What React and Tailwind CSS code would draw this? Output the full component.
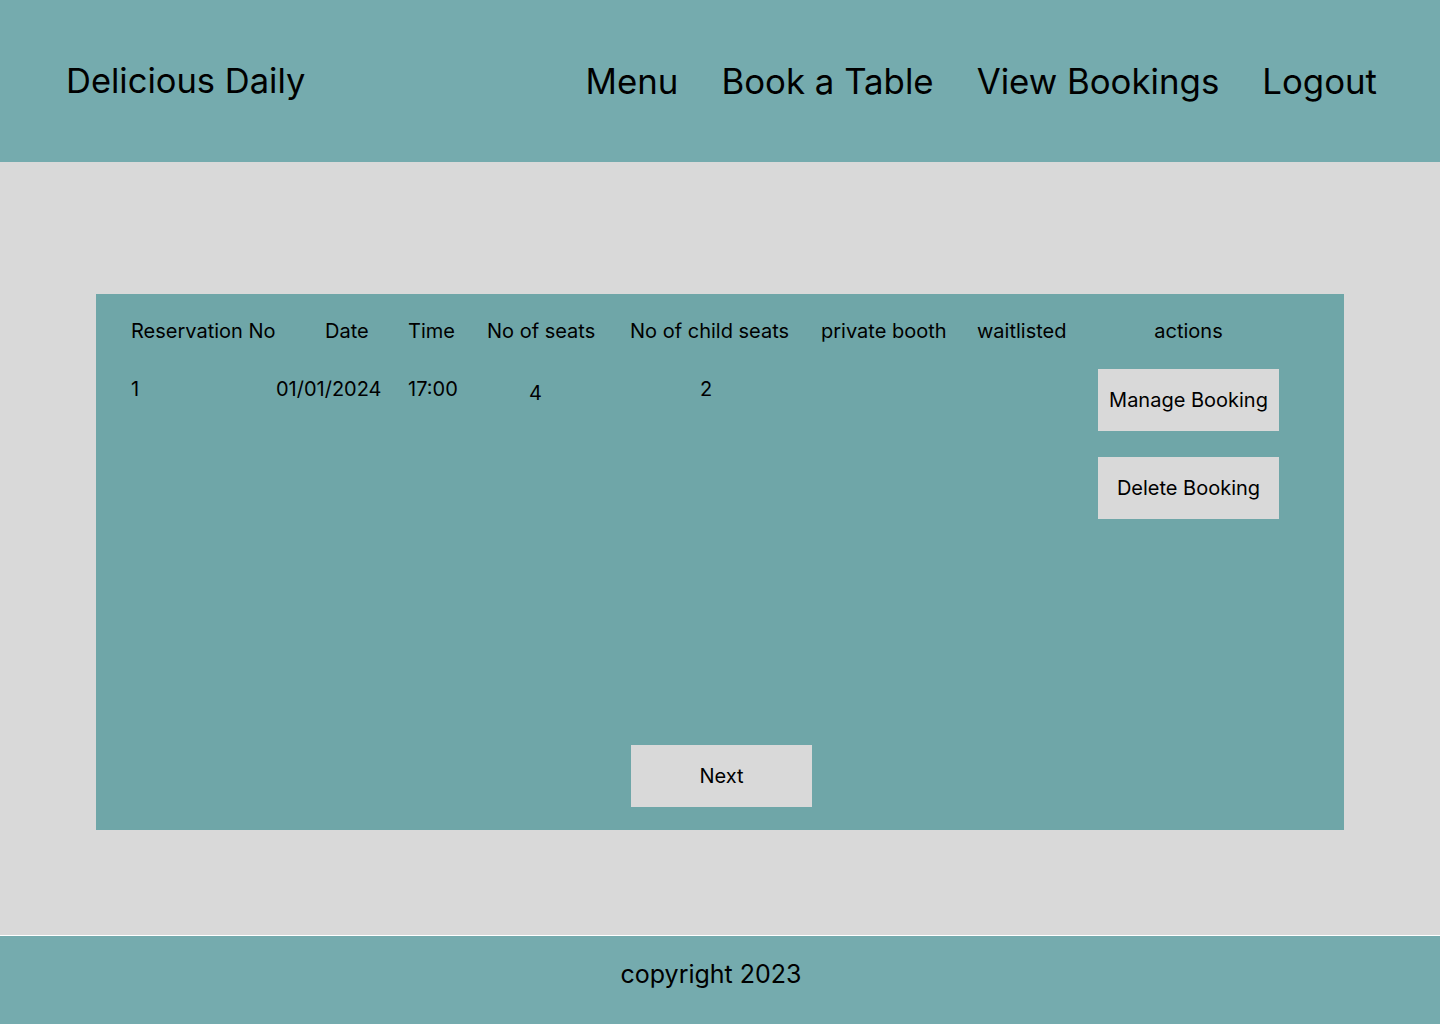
const nav = ['Menu', 'Book a Table', 'View Bookings', 'Logout'];

const headers = [
  { label: 'Reservation No', cls: '' },
  { label: 'Date', cls: 'pl-[49px]' },
  { label: 'Time', cls: '' },
  { label: 'No of seats', cls: '' },
  { label: 'No of child seats', cls: '' },
  { label: 'private booth', cls: '' },
  { label: 'waitlisted', cls: '' },
  { label: 'actions', cls: 'text-center' },
];

const GrayButton = ({ children, className = '' }) => (
  <button className={`w-[181px] h-[62px] bg-[#d9d9d9] text-[20px] text-black ${className}`}>
    {children}
  </button>
);

export default function App() {
  return (
    <div className="min-h-screen flex flex-col bg-[#d9d9d9] text-black font-['Inter','Liberation_Sans',sans-serif]">
      {/* Header */}
      <header className="h-[162px] bg-[#75abae] flex items-center justify-between pl-[66px] pr-[63px]">
        <h1 className="text-[34.5px] leading-none">Delicious Daily</h1>
        <nav className="flex items-center gap-[43px]">
          {nav.map((n) => (
            <a key={n} href="#" className="text-[34.8px] leading-none">
              {n}
            </a>
          ))}
        </nav>
      </header>

      {/* Bookings panel */}
      <main className="h-[773px] pt-[132px] px-[96px]">
        <div className="h-[536px] bg-[#6fa6a8] flex flex-col pl-[35px] pt-[25px] pb-[23px]">
          <div className="grid grid-cols-[145px_132px_79px_143px_191px_156px_121px_181px] text-[20px] leading-[24px]">
            {headers.map((h) => (
              <div key={h.label} className={`whitespace-nowrap ${h.cls}`}>
                {h.label}
              </div>
            ))}
          </div>

          <div className="grid grid-cols-[145px_132px_79px_143px_191px_156px_121px_181px] text-[20px] leading-[24px] mt-[26px]">
            <div className="pt-[8px]">1</div>
            <div className="pt-[8px]">01/01/2024</div>
            <div className="pt-[8px]">17:00</div>
            <div className="pt-[12px] pl-[42px]">4</div>
            <div className="pt-[8px] pl-[70px]">2</div>
            <div />
            <div />
            <div className="flex flex-col gap-[26px]">
              <GrayButton>Manage Booking</GrayButton>
              <GrayButton>Delete Booking</GrayButton>
            </div>
          </div>

          <div className="mt-auto flex justify-center pr-[32px]">
            <GrayButton>Next</GrayButton>
          </div>
        </div>
      </main>

      {/* Footer */}
      <footer className="h-[89px] border-t border-white bg-[#75abae] flex items-center justify-center pr-[18px] pb-[12px]">
        <p className="text-[25px] leading-none">copyright 2023</p>
      </footer>
    </div>
  );
}
